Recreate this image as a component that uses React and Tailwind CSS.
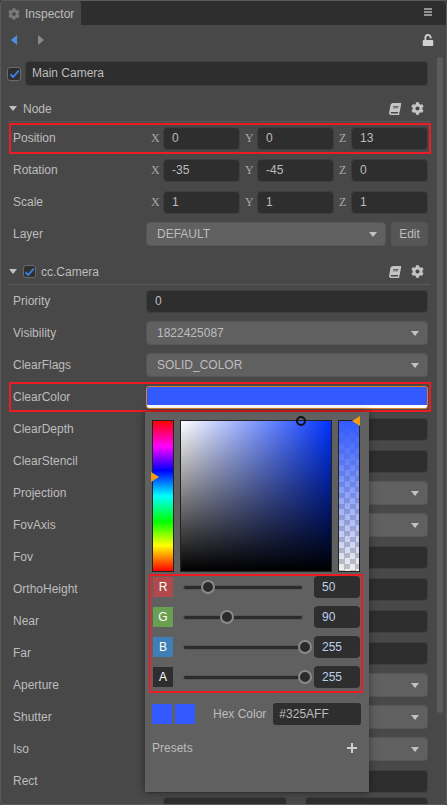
import React from 'react';
import { FaBook, FaCog, FaUnlock } from 'react-icons/fa';

const labelCls = 'w-[133px] shrink-0 text-[#bdbdbd]';
const inputCls = 'h-[23px] rounded-[4px] border border-[#3f3f3f] bg-[#2e2e2e] pl-2 leading-[21px] text-[#bdbdbd]';

const Check = ({ className }) => (
  <div className={`flex items-center justify-center rounded-[3px] border border-[#6a6a6a] bg-[#2e2e2e] ${className}`}>
    <svg width="11" height="10" viewBox="0 0 11 10">
      <path d="M1.5 5.2 L4.2 8 L9.8 1.6" fill="none" stroke="#3d7bd9" strokeWidth="2" />
    </svg>
  </div>
);

const Caret = ({ className }) => (
  <svg width="8" height="5" viewBox="0 0 8 5" className={className}>
    <path d="M0 0 H8 L4 5 Z" fill="#c2c2c2" />
  </svg>
);

// boxed rows get the red annotation drawn over them
const Row = ({ label, children, boxed }) => (
  <div className="relative flex h-8 items-center pl-[13px] pr-[19px]">
    <div className={labelCls}>{label}</div>
    <div className="min-w-0 flex-1">{children}</div>
    {boxed && <div className={`pointer-events-none absolute left-[9px] top-[1px] w-[422px] border-2 border-[#ed1c24] ${boxed}`} />}
  </div>
);

const Vec = ({ values }) => (
  <div className="grid grid-cols-3">
    {['X', 'Y', 'Z'].map((axis, i) => (
      <div key={axis} className="flex items-center">
        <span className="w-[17px] pl-[5px] font-['Liberation_Serif',serif] text-[#aaaaaa]">{axis}</span>
        <div className={`flex-1 ${inputCls}`}>{values[i]}</div>
      </div>
    ))}
  </div>
);

const Input = ({ value }) => <div className={inputCls}>{value}</div>;

const Select = ({ value, className = '' }) => (
  <div className={`flex h-[24px] items-center justify-between rounded-[4px] border border-[#565656] bg-[#606060] pl-[10px] pr-[8px] text-[#bdbdbd] ${className}`}>
    <span>{value}</span>
    <Caret />
  </div>
);

const Header = ({ title, check, className = '' }) => (
  <div className={`ml-[7px] mr-[17px] flex h-[25px] items-center justify-between border-b border-[#5a5a5a] pb-[1px] ${className}`}>
    <div className="flex items-center">
      <Caret className="ml-[2px]" />
      {check && <Check className="ml-[6px] h-[13px] w-[13px]" />}
      <span className={`text-[#bdbdbd] ${check ? 'ml-[5px]' : 'ml-[6px]'}`}>{title}</span>
    </div>
    <div className="flex items-center gap-[10px] pr-[6px] text-[#c4c4c4]">
      <FaBook size={12} className="skew-x-[-10deg]" />
      <FaCog size={13} />
    </div>
  </div>
);

const Slider = ({ name, tone, pos, value }) => (
  <div className="flex h-[30px] items-center pl-[1px]">
    <div className={`flex h-5 w-5 items-center justify-center text-white ${tone}`}>{name}</div>
    <div className="relative ml-[10px] h-[5px] w-[120px] rounded-full border border-[#565656] bg-[#2b2b2b]">
      <div className={`absolute top-[-6px] h-[14px] w-[14px] rounded-full border-2 border-[#8a8a8a] bg-[#2b2b2b] ${pos}`} />
    </div>
    <div className="ml-[11px] h-[22px] w-[46px] rounded-[4px] bg-[#2e2e2e] pl-2 leading-[22px] text-[#bdd0ec]">{value}</div>
  </div>
);

const ColorPicker = () => (
  <div className="absolute left-[145px] top-[412px] h-[380px] w-[224px] bg-[#606060] px-[7px] pt-[8px] shadow-[0_0_8px_rgba(0,0,0,0.45)]">
    <div className="flex gap-[6px]">
      <div className="relative h-[152px] w-[22px] border border-[#222] bg-[linear-gradient(to_bottom,#ff0000,#ff00ff_17%,#0000ff_33%,#00ffff_50%,#00ff00_67%,#ffff00_83%,#ff0000)]">
        <svg width="9" height="10" viewBox="0 0 9 10" className="absolute left-[-2px] top-[51px]">
          <path d="M0 0 L8 5 L0 10 Z" fill="#f39c12" />
        </svg>
      </div>
      <div className="relative h-[152px] w-[152px] border border-[#222] bg-[linear-gradient(to_bottom,transparent,#000000),linear-gradient(to_right,#ffffff,#0033ff)]">
        <div className="absolute left-[115px] top-[-5px] h-[10px] w-[10px] rounded-full border-2 border-[#111]" />
      </div>
      <div className="relative h-[152px] w-[22px] border border-[#222] bg-[linear-gradient(to_bottom,#325aff,rgba(50,90,255,0)),repeating-conic-gradient(#c0c0c0_0_25%,#f0f0f0_0_50%)] bg-[length:100%_100%,11px_11px]">
        <svg width="9" height="10" viewBox="0 0 9 10" className="absolute right-[-2px] top-[-5px]">
          <path d="M8 0 L0 5 L8 10 Z" fill="#f39c12" />
        </svg>
      </div>
    </div>
    <div className="relative">
      <Slider name="R" tone="bg-[#b04a4a]" pos="left-[17px]" value="50" />
      <Slider name="G" tone="bg-[#6a9f52]" pos="left-[36px]" value="90" />
      <Slider name="B" tone="bg-[#3f7fb8]" pos="left-[114px]" value="255" />
      <Slider name="A" tone="bg-[#2e2e2e]" pos="left-[114px]" value="255" />
      <div className="pointer-events-none absolute left-[-3px] right-[-1px] top-[2px] bottom-[-1px] border-2 border-[#ed1c24]" />
    </div>
    <div className="mt-[11px] flex items-center">
      <div className="h-5 w-5 bg-[#325aff]" />
      <div className="ml-[3px] h-5 w-5 bg-[#325aff]" />
      <span className="ml-[18px] text-[#bdbdbd]">Hex Color</span>
      <div className="ml-[7px] h-[22px] w-[88px] rounded-[3px] bg-[#2e2e2e] pl-[6px] leading-[22px] text-[#bdbdbd]">#325AFF</div>
    </div>
    <div className="mt-[14px] flex items-center justify-between pr-[5px]">
      <span className="text-[#bdbdbd]">Presets</span>
      <svg width="10" height="10" viewBox="0 0 10 10">
        <path d="M0 5 H10 M5 0 V10" stroke="#d0d0d0" strokeWidth="2" />
      </svg>
    </div>
  </div>
);

export default function App() {
  return (
    <div className="relative h-[805px] w-[447px] overflow-hidden bg-[#484848] pt-[1px] font-['Liberation_Sans',Arial,sans-serif] text-[12px]">
      {/* Tab bar */}
      <div className="flex h-[24px] bg-[#2e2e2e]">
        <div className="flex w-[81px] items-center gap-[5px] rounded-t-[3px] bg-[#484848] pl-2 pt-[1px]">
          <FaCog size={12} className="text-[#7a7a7a]" />
          <span className="text-[#bdbdbd]">Inspector</span>
        </div>
        <div className="flex flex-1 items-center justify-end pb-[2px] pr-[15px]">
          <svg width="8" height="8" viewBox="0 0 8 8">
            <path d="M0 1 H8 M0 4 H8 M0 7 H8" stroke="#b5b5b5" strokeWidth="1.6" />
          </svg>
        </div>
      </div>

      {/* Back / forward / lock */}
      <div className="flex h-[30px] items-center justify-between pl-[11px] pr-[13px]">
        <div className="flex gap-[21px]">
          <svg width="6" height="10" viewBox="0 0 6 10"><path d="M6 0 V10 L0 5 Z" fill="#4a90e2" /></svg>
          <svg width="6" height="10" viewBox="0 0 6 10"><path d="M0 0 V10 L6 5 Z" fill="#8a8a8a" /></svg>
        </div>
        <FaUnlock size={12} className="mb-[1px] text-[#d0d0d0]" />
      </div>

      {/* Node name */}
      <div className="mt-[6px] flex items-center pl-[7px] pr-[19px]">
        <Check className="h-[14px] w-[14px]" />
        <div className="ml-[4px] h-[25px] flex-1 rounded-[4px] border border-[#3f3f3f] bg-[#2e2e2e] pl-[6px] leading-[23px] text-[#bdbdbd]">Main Camera</div>
      </div>

      <Header title="Node" className="mt-[11px]" />
      <Row label="Position" boxed="bottom-0"><Vec values={['0', '0', '13']} /></Row>
      <Row label="Rotation"><Vec values={['-35', '-45', '0']} /></Row>
      <Row label="Scale"><Vec values={['1', '1', '1']} /></Row>
      <Row label="Layer">
        <div className="flex gap-[5px]">
          <Select value="DEFAULT" className="flex-1" />
          <div className="flex h-[24px] w-[37px] items-center justify-center rounded-[4px] bg-[#565656] text-[#bdbdbd]">Edit</div>
        </div>
      </Row>

      <Header title="cc.Camera" check className="mt-[10px]" />
      <Row label="Priority"><Input value="0" /></Row>
      <Row label="Visibility"><Select value="1822425087" /></Row>
      <Row label="ClearFlags"><Select value="SOLID_COLOR" /></Row>
      <Row label="ClearColor" boxed="bottom-[1px]">
        <div className="h-[23px] overflow-hidden rounded-[3px] border border-[#d9822b] bg-[#325aff]">
          <div className="mt-[18px] h-[3px] bg-white" />
        </div>
      </Row>
      <Row label="ClearDepth"><Input /></Row>
      <Row label="ClearStencil"><Input /></Row>
      <Row label="Projection"><Select /></Row>
      <Row label="FovAxis"><Select /></Row>
      <Row label="Fov"><Input /></Row>
      <Row label="OrthoHeight"><Input /></Row>
      <Row label="Near"><Input /></Row>
      <Row label="Far"><Input /></Row>
      <Row label="Aperture"><Select /></Row>
      <Row label="Shutter"><Select /></Row>
      <Row label="Iso"><Select /></Row>
      <Row label="Rect"><Input /></Row>
      <div className="ml-[163px] mr-[19px] flex gap-[18px]">
        <div className={`flex-1 ${inputCls}`} />
        <div className={`flex-1 ${inputCls}`} />
      </div>

      {/* scrollbar */}
      <div className="absolute left-[437px] top-[57px] h-[656px] w-[6px] rounded-full bg-[#5c5c5c]" />

      <ColorPicker />

      {/* panel frame */}
      <div className="pointer-events-none absolute inset-0 rounded-[4px] border border-[#5a5a5a]" />
    </div>
  );
}
